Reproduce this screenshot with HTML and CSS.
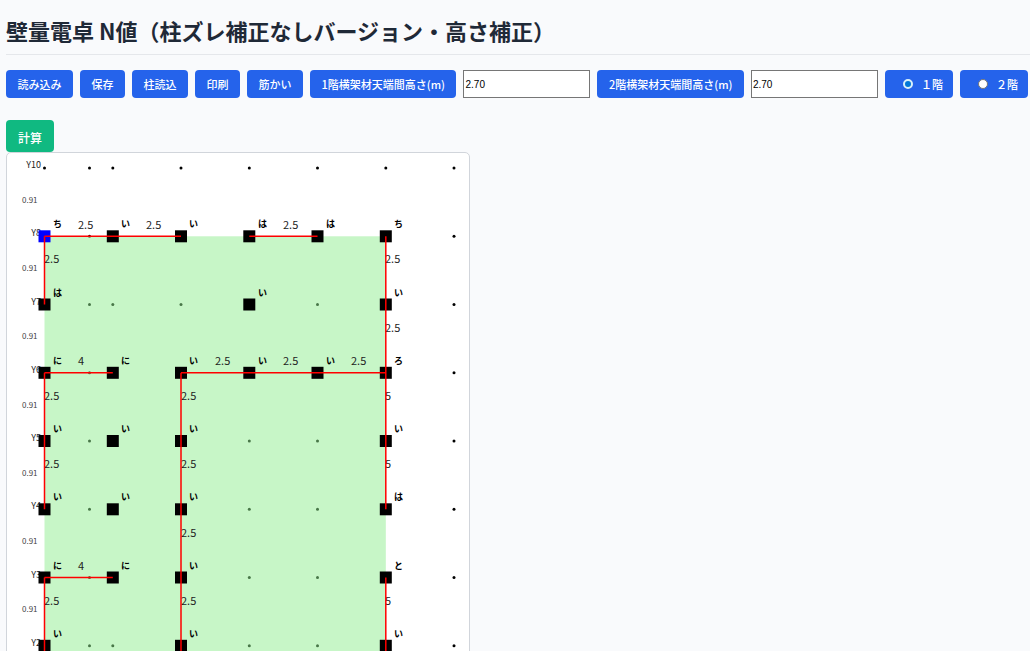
FILE: index.html
```html
<!DOCTYPE html>
<html lang="ja">
<head>
<meta charset="utf-8">
<title>壁量電卓 N値</title>
<link rel="stylesheet" href="styles.css">
</head>
<body>
<h1 class="title">壁量電卓 N値（柱ズレ補正なしバージョン・高さ補正）</h1>
<form class="toolbar">
  <button class="btn" type="button">読み込み</button>
  <button class="btn" type="button">保存</button>
  <button class="btn" type="button">柱読込</button>
  <button class="btn" type="button">印刷</button>
  <button class="btn" type="button">筋かい</button>
  <label class="btn" for="h1">1階横架材天端間高さ(m)</label>
  <input class="height" id="h1" type="text" value="2.70">
  <label class="btn" for="h2">2階横架材天端間高さ(m)</label>
  <input class="height" id="h2" type="text" value="2.70">
  <label class="btn floor"><input class="radio" type="radio" name="floor" checked>１階</label>
  <label class="btn floor"><input class="radio" type="radio" name="floor">２階</label>
</form>
<button class="calc" type="button">計算</button>
<main class="board">
<svg class="plan" width="462" height="508" viewBox="0 0 462 508">
  <defs>
    <rect id="post" x="-6" y="-6" width="12" height="12"/>
    <g id="dots">
      <circle cx="82.5" r="1.5"/><circle cx="105.8" r="1.5"/><circle cx="174" r="1.5"/><circle cx="242.3" r="1.5"/><circle cx="310.5" r="1.5"/><circle cx="378.8" r="1.5"/><circle cx="447" r="1.5"/>
    </g>
  </defs>

  <circle cx="37.5" cy="15" r="1.5"/>
  <use href="#dots" y="15"/><use href="#dots" y="83.3"/><use href="#dots" y="151.5"/><use href="#dots" y="219.8"/><use href="#dots" y="288"/><use href="#dots" y="356.3"/><use href="#dots" y="424.5"/><use href="#dots" y="492.8"/>

  <g class="axis">
    <text x="34" y="15">Y10</text><text x="34" y="83">Y8</text><text x="34" y="152">Y7</text><text x="34" y="220">Y6</text><text x="34" y="288">Y5</text><text x="34" y="356">Y4</text><text x="34" y="425">Y3</text><text x="34" y="493">Y2</text>
  </g>
  <g class="span">
    <text x="15" y="50">0.91</text><text x="15" y="118">0.91</text><text x="15" y="186">0.91</text><text x="15" y="255">0.91</text><text x="15" y="323">0.91</text><text x="15" y="391">0.91</text><text x="15" y="459">0.91</text>
  </g>

  <rect class="area" x="37.5" y="83.3" width="341.3" height="425"/>

  <use class="origin" href="#post" x="37.5" y="83.3"/>
  <use href="#post" x="105.8" y="83.3"/><use href="#post" x="174" y="83.3"/><use href="#post" x="242.3" y="83.3"/><use href="#post" x="310.5" y="83.3"/><use href="#post" x="378.8" y="83.3"/>
  <use href="#post" x="37.5" y="151.5"/><use href="#post" x="242.3" y="151.5"/><use href="#post" x="378.8" y="151.5"/>
  <use href="#post" x="37.5" y="219.8"/><use href="#post" x="105.8" y="219.8"/><use href="#post" x="174" y="219.8"/><use href="#post" x="242.3" y="219.8"/><use href="#post" x="310.5" y="219.8"/><use href="#post" x="378.8" y="219.8"/>
  <use href="#post" x="37.5" y="288"/><use href="#post" x="105.8" y="288"/><use href="#post" x="174" y="288"/><use href="#post" x="378.8" y="288"/>
  <use href="#post" x="37.5" y="356.3"/><use href="#post" x="105.8" y="356.3"/><use href="#post" x="174" y="356.3"/><use href="#post" x="378.8" y="356.3"/>
  <use href="#post" x="37.5" y="424.5"/><use href="#post" x="105.8" y="424.5"/><use href="#post" x="174" y="424.5"/><use href="#post" x="378.8" y="424.5"/>
  <use href="#post" x="37.5" y="492.8"/><use href="#post" x="174" y="492.8"/><use href="#post" x="378.8" y="492.8"/>

  <g class="ratio">
    <text x="71" y="76">2.5</text><text x="139" y="76">2.5</text><text x="276" y="76">2.5</text>
    <text x="37" y="110">2.5</text><text x="378" y="110">2.5</text>
    <text x="378" y="179">2.5</text>
    <text x="71" y="212">4</text><text x="208" y="212">2.5</text><text x="276" y="212">2.5</text><text x="344" y="212">2.5</text>
    <text x="37" y="247">2.5</text><text x="174" y="247">2.5</text><text x="378" y="247">5</text>
    <text x="37" y="315">2.5</text><text x="174" y="315">2.5</text><text x="378" y="315">5</text>
    <text x="174" y="384">2.5</text>
    <text x="71" y="417">4</text>
    <text x="37" y="452">2.5</text><text x="174" y="452">2.5</text><text x="378" y="452">5</text>
  </g>

  <path class="wall" d="M37.5 83.3H174M242.3 83.3H310.5M37.5 83.3V151.5M378.8 83.3V356.3M37.5 219.8H105.8M174 219.8H378.8M37.5 219.8V356.3M174 219.8V508M37.5 424.5H105.8M37.5 424.5V508M378.8 424.5V508"/>

  <g class="joint">
    <text x="46" y="74">ち</text><text x="114" y="74">い</text><text x="182" y="74">い</text><text x="251" y="74">は</text><text x="319" y="74">は</text><text x="387" y="74">ち</text>
    <text x="46" y="143">は</text><text x="251" y="143">い</text><text x="387" y="143">い</text>
    <text x="46" y="211">に</text><text x="114" y="211">に</text><text x="182" y="211">い</text><text x="251" y="211">い</text><text x="319" y="211">い</text><text x="387" y="211">ろ</text>
    <text x="46" y="279">い</text><text x="114" y="279">い</text><text x="182" y="279">い</text><text x="387" y="279">い</text>
    <text x="46" y="347">い</text><text x="114" y="347">い</text><text x="182" y="347">い</text><text x="387" y="347">は</text>
    <text x="46" y="416">に</text><text x="114" y="416">に</text><text x="182" y="416">い</text><text x="387" y="416">と</text>
    <text x="46" y="484">い</text><text x="182" y="484">い</text><text x="387" y="484">い</text>
  </g>
</svg>
</main>
</body>
</html>
```
FILE: styles.css
```css
html {
  background: #f9fafc;
}

body {
  margin: 0;
  padding: 14px 0 0 6px;
  overflow: hidden;
  font-family: "Noto Sans CJK JP", sans-serif;
  color: #1f2937;
}

.title {
  margin: 0 0 15px;
  padding-bottom: 8px;
  border-bottom: 1px solid #e5e7eb;
  font-size: 22px;
  font-weight: 600;
  line-height: 32px;
  white-space: nowrap;
}

.toolbar {
  display: flex;
  gap: 7px;
  margin: 0 2px 22px 0;
}

.btn,
.calc {
  display: flex;
  align-items: center;
  justify-content: center;
  box-sizing: border-box;
  height: 28px;
  padding: 0 10px;
  border: 0;
  border-radius: 4px;
  background: #2563eb;
  color: #fff;
  font-family: inherit;
  font-size: 11px;
  font-weight: 500;
  white-space: nowrap;
}

.btn {
  flex-grow: 1;
}

.calc {
  height: 32px;
  padding: 2px 12px 0;
  background: #10b981;
  font-size: 12px;
}

.height {
  box-sizing: border-box;
  width: 127px;
  height: 28px;
  padding: 0 1px;
  border: 1px solid #767676;
  border-radius: 0;
  background: #fff;
  color: #000;
  font-family: "Liberation Sans", sans-serif;
  font-size: 10px;
}

.floor {
  flex-grow: 0;
  padding-left: 18px;
}

.radio {
  width: 10px;
  height: 10px;
  margin: 0 8px 0 0;
  box-sizing: border-box;
  appearance: none;
  border: 1px solid #767676;
  border-radius: 50%;
  background: #fff;
}

.radio:checked {
  border: 2px solid #d8f0fa;
  background: #0078d7;
}

.board {
  width: fit-content;
  border: 1px solid #d1d5db;
  border-radius: 5px;
  background: #fff;
}

.plan {
  display: block;
}

.axis {
  font-size: 9px;
  fill: #222;
  text-anchor: end;
}

.span {
  font-size: 8px;
  fill: #444;
}

.area {
  fill: rgba(144, 238, 144, 0.5);
}

.origin {
  fill: #00f;
}

.ratio {
  font-size: 11px;
  fill: #222;
}

.wall {
  fill: none;
  stroke: #f00;
  stroke-width: 1.5;
}

.joint {
  font-size: 9px;
  font-weight: 700;
  fill: #000;
}
```
